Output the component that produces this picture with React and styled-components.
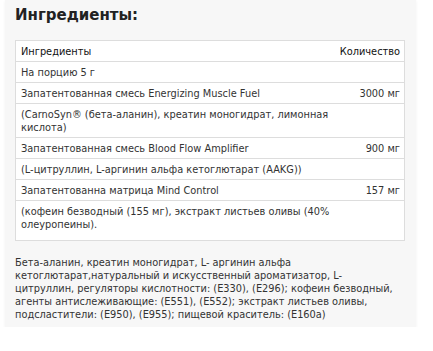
import React from 'react';
import styled, { createGlobalStyle } from 'styled-components';

const GlobalStyle = createGlobalStyle`
  html, body {
    margin: 0;
    padding: 0;
    background: #ffffff;
  }
  body {
    font-family: 'DejaVu Sans', 'Liberation Sans', sans-serif;
  }
`;

const Panel = styled.section`
  width: 411px;
  margin-left: 5px;
  padding: 6px 11px 6px 10px;
  box-sizing: border-box;
  background-color: #f7f7f7;
  box-shadow: 0 1px 3px rgba(0, 0, 0, 0.06);
`;

const Title = styled.h2`
  margin: 0 0 16px;
  font-family: 'DejaVu Sans', sans-serif;
  font-weight: bold;
  font-size: 15px;
  line-height: 18px;
  color: #222222;
`;

const Table = styled.table`
  width: 100%;
  border-collapse: collapse;
  background-color: #ffffff;
  border: 1px solid #dddddd;
  font-size: 9.8px;
  line-height: 13px;
  color: #333333;
`;

const Row = styled.tr`
  border-bottom: 1px solid #dddddd;
`;

const Cell = styled.td`
  padding: 4px 4px ${(p) => (p.$tall ? '9px' : '3px')} 5px;
  text-align: ${(p) => (p.$right ? 'right' : 'left')};
  white-space: nowrap;
  width: ${(p) => (p.$right ? '70px' : 'auto')};
  vertical-align: top;
  color: ${(p) => (p.$head ? '#111111' : '#333333')};
`;

const Note = styled.p`
  margin: 15px 0 0;
  font-size: 9.8px;
  line-height: 13px;
  color: #333333;
  white-space: nowrap;
`;

const rows = [
  { name: 'На порцию 5 г', amount: '' },
  { name: 'Запатентованная смесь Energizing Muscle Fuel', amount: '3000 мг' },
  { name: ['(CarnoSyn® (бета-аланин), креатин моногидрат, лимонная', 'кислота)'], amount: '' },
  { name: 'Запатентованная смесь Blood Flow Amplifier', amount: '900 мг' },
  { name: '(L-цитруллин, L-аргинин альфа кетоглютарат (AAKG))', amount: '' },
  { name: 'Запатентованна матрица Mind Control', amount: '157 мг' },
  { name: ['(кофеин безводный (155 мг), экстракт листьев оливы (40%', 'олеуропеины).'], amount: '', tall: true },
];

const renderLines = (lines) =>
  Array.isArray(lines)
    ? lines.map((line, i) => (
        <React.Fragment key={i}>
          {i > 0 && <br />}
          {line}
        </React.Fragment>
      ))
    : lines;

const App = () => {
  return (
    <>
      <GlobalStyle />
      <Panel>
        <Title>Ингредиенты:</Title>
        <Table>
          <tbody>
            <Row>
              <Cell $head>Ингредиенты</Cell>
              <Cell $head $right>Количество</Cell>
            </Row>
            {rows.map((row, i) => (
              <Row key={i}>
                <Cell $tall={row.tall}>{renderLines(row.name)}</Cell>
                <Cell $right $tall={row.tall}>{row.amount}</Cell>
              </Row>
            ))}
          </tbody>
        </Table>
        <Note>
          Бета-аланин, креатин моногидрат, L- аргинин альфа
          <br />
          кетоглютарат,натуральный и искусственный ароматизатор, L-
          <br />
          цитруллин, регуляторы кислотности: (E330), (E296); кофеин безводный,
          <br />
          агенты антислеживающие: (E551), (E552); экстракт листьев оливы,
          <br />
          подсластители: (E950), (E955); пищевой краситель: (E160a)
        </Note>
      </Panel>
    </>
  );
};

export default App;
